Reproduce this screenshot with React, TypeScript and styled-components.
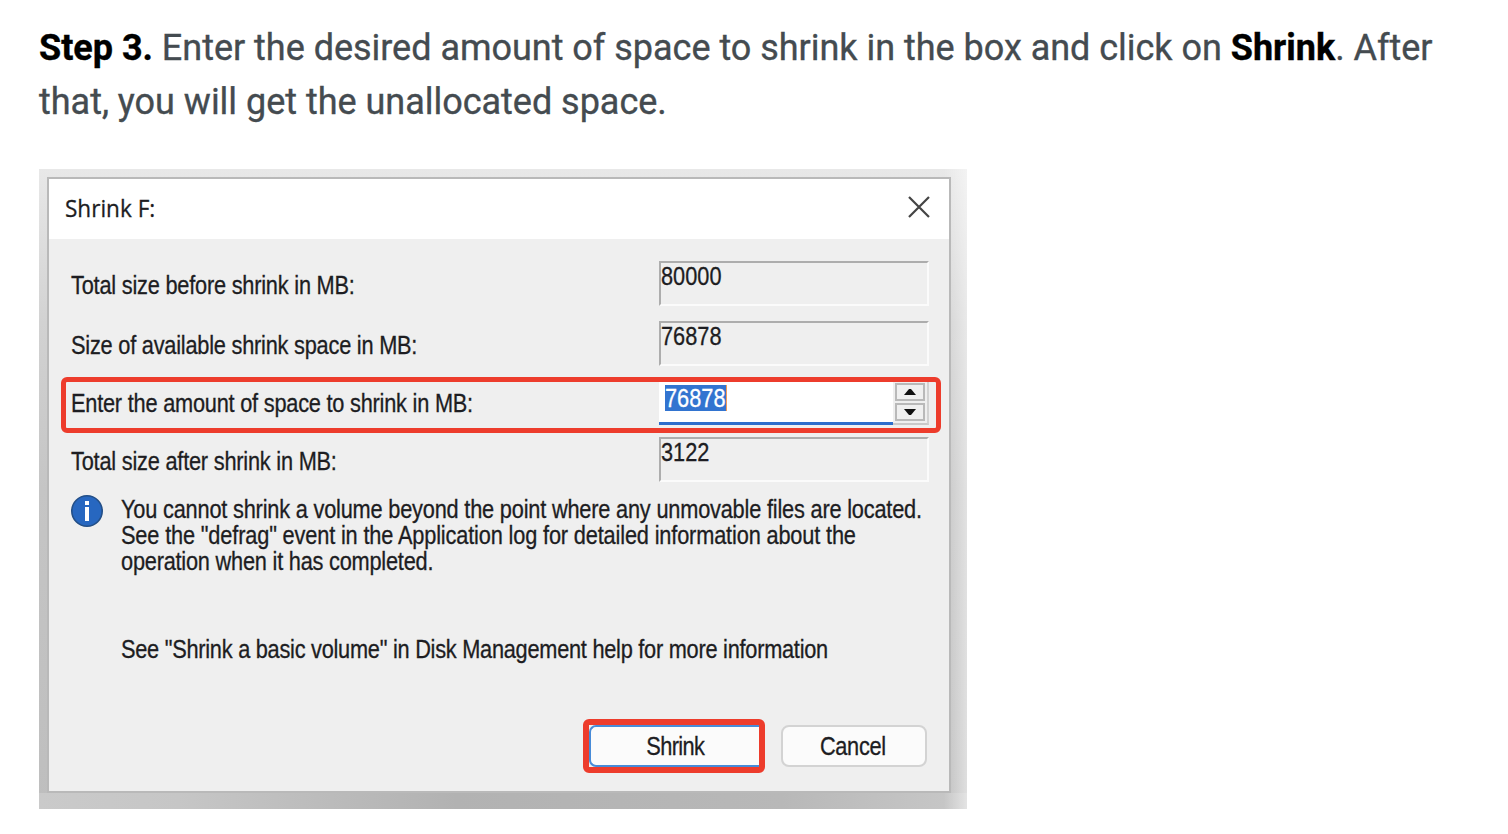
import React from "react";
import styled, { createGlobalStyle } from "styled-components";

const GlobalStyle = createGlobalStyle`
  *, *::before, *::after { box-sizing: border-box; }
  body { margin: 0; background: #fff; overflow: hidden; }
  svg { flex: none; }
`;

const Article = styled.main`
  height: 834px;
  padding: 21px 39px 0;
  overflow: hidden;
`;

const StepText = styled.p`
  margin: 0 0 40px;
  color: #444b50;
  font: 400 36px/54px Roboto, sans-serif;
  letter-spacing: -0.02px;
  white-space: nowrap;
  -webkit-text-stroke: 0.35px currentColor;

  strong { color: #000; font-weight: 700; }
`;

const Figure = styled.figure`
  display: flex;
  width: 928px;
  height: 640px;
  margin: 0;
  padding: 8px 16px 16px 8px;
  background:
    linear-gradient(to right, transparent 905px, rgba(255, 255, 255, 0.5) 928px),
    linear-gradient(to right, #cacaca, #c6c6c6 15%, #b2b2b2 45%, #b8b8b8 80%, #c8c8c8) 0 100% / 100% 16px no-repeat,
    linear-gradient(to bottom, #e8e8e8, #d2d2d2 24%, #c5c5c5 50%, #bebebe);
`;

const Dialog = styled.section`
  display: flex;
  flex-direction: column;
  width: 904px;
  height: 616px;
  border: 2px solid #b9b9b9;
  background: #efefef;
  color: #1d1d22;
  font: 400 25px/26px "Liberation Sans", Arial, sans-serif;
`;

const TitleBar = styled.header`
  display: flex;
  justify-content: space-between;
  height: 60px;
  padding: 17px 19px 0 16px;
  background: #fff;
`;

const Title = styled.h1`
  margin: -1px 0 0;
  font: 400 23.5px/26px "Open Sans", "Noto Sans", sans-serif;
  transform: scaleX(0.96);
  transform-origin: left;
  -webkit-text-stroke: 0.3px currentColor;
`;

const Text = styled.span<{ $spacing?: number; $center?: boolean }>`
  display: block;
  white-space: nowrap;
  letter-spacing: ${(p) => p.$spacing ?? 0}px;
  transform: scaleX(0.87);
  transform-origin: ${(p) => (p.$center ? "center" : "left")};
  -webkit-text-stroke: 0.3px currentColor;
`;

const Form = styled.div`
  display: flex;
  flex-direction: column;
  padding: 22px 8px 0 12px;
`;

const Row = styled.div<{ $gap: number }>`
  display: flex;
  justify-content: space-between;
  height: 45px;
  margin-bottom: ${(p) => p.$gap}px;
  padding: 11px 12px 0 10px;
`;

const Value = styled.output`
  width: 270px;
  height: 45px;
  margin-top: -11px;
  border: 2px solid #fbfbfb;
  border-top-color: #adadad;
  border-left-color: #adadad;
  line-height: 27px;
`;

const HighlightRow = styled.div`
  display: flex;
  justify-content: space-between;
  height: 56px;
  margin-bottom: 4px;
  padding: 8px 7px 0 5px;
  border: 5px solid #ed3c2c;
  border-radius: 6px;
`;

const Spinner = styled.div`
  display: flex;
  width: 270px;
  height: 43px;
  margin-top: -8px;
`;

const Entry = styled.div`
  width: 234px;
  height: 43px;
  padding: 3px 6px;
  border-bottom: 3px solid #2d6dcb;
  background: #fff;
`;

const Selection = styled.mark`
  display: block;
  width: 62px;
  height: 26px;
  border-right: 1px solid #f19a55;
  background: #3274d0;
  color: #fff;
  line-height: 27px;
`;

const Arrows = styled.div`
  display: flex;
  flex-direction: column;
  gap: 2px;
  width: 36px;
  padding: 1px 4px 0 2px;
  border-right: 2px solid #d2d2d2;
  border-bottom: 2px solid #c9c9c9;
`;

const ArrowButton = styled.div`
  display: grid;
  place-items: center;
  width: 30px;
  height: 18px;
  border: 2px solid #b9b9b9;
  background: #f0f0f0;
`;

const Notice = styled.div`
  display: flex;
  height: 128px;
  padding: 13px 0 0 22px;
`;

const NoticeCopy = styled.div`
  padding: 1px 0 0 18px;
`;

const Help = styled.div`
  height: 92px;
  padding: 26px 0 0 72px;
`;

const Actions = styled.footer`
  display: flex;
  gap: 16px;
  margin-top: auto;
  padding: 0 22px 18px 534px;
`;

const PrimaryFrame = styled.div`
  width: 182px;
  height: 54px;
  border: 6px solid #ed3c2c;
  border-radius: 6px;
  background: #efefef;
`;

const Button = styled.button<{ $primary?: boolean }>`
  display: grid;
  place-items: center;
  width: ${(p) => (p.$primary ? 170 : 146)}px;
  height: 42px;
  margin: ${(p) => (p.$primary ? 0 : "6px 0 0")};
  padding: ${(p) => (p.$primary ? "0 0 0 1px" : "0 3px 0 0")};
  border: ${(p) => (p.$primary ? "2px solid #478bd8" : "2px solid #d3d3d3")};
  border-right-width: ${(p) => (p.$primary ? 0 : 2)}px;
  border-radius: ${(p) => (p.$primary ? "7px 0 0 7px" : "8px")};
  background: #fbfbfb;
  color: inherit;
  font: inherit;
`;

function CloseIcon() {
  return (
    <svg width="22" height="22" viewBox="0 0 22 22" fill="none" stroke="#444" strokeWidth="2.2">
      <path d="M1 1 21 21M21 1 1 21" />
    </svg>
  );
}

function InfoIcon() {
  return (
    <svg width="32" height="32" viewBox="0 0 32 32">
      <circle cx="16" cy="16" r="15.2" fill="#2767c0" stroke="#234f87" strokeWidth="1.6" />
      <path d="M14 6h4v4h-4zM14 12h4v14h-4z" fill="#fff" />
    </svg>
  );
}

function Triangle({ down }: { down?: boolean }) {
  return (
    <svg width="12" height="6" viewBox="0 0 12 6">
      <path d={down ? "M0 0H12L7 6h-2z" : "M0 6H12L7 0h-2z"} fill="#111" />
    </svg>
  );
}

export default function App() {
  return (
    <Article>
      <GlobalStyle />
      <StepText>
        <strong>Step 3.</strong> Enter the desired amount of space to shrink in the box and click on <strong>Shrink</strong>. After
        <br />
        that, you will get the unallocated space.
      </StepText>
      <Figure>
        <Dialog>
          <TitleBar>
            <Title>Shrink F:</Title>
            <CloseIcon />
          </TitleBar>
          <Form>
            <Row $gap={15}>
              <Text $spacing={-0.24}>Total size before shrink in MB:</Text>
              <Value><Text>80000</Text></Value>
            </Row>
            <Row $gap={11}>
              <Text $spacing={-0.25}>Size of available shrink space in MB:</Text>
              <Value><Text>76878</Text></Value>
            </Row>
            <HighlightRow>
              <Text $spacing={-0.25}>Enter the amount of space to shrink in MB:</Text>
              <Spinner>
                <Entry><Selection><Text>76878</Text></Selection></Entry>
                <Arrows>
                  <ArrowButton><Triangle /></ArrowButton>
                  <ArrowButton><Triangle down /></ArrowButton>
                </Arrows>
              </Spinner>
            </HighlightRow>
            <Row $gap={0}>
              <Text $spacing={-0.24}>Total size after shrink in MB:</Text>
              <Value><Text>3122</Text></Value>
            </Row>
          </Form>
          <Notice>
            <InfoIcon />
            <NoticeCopy>
              <Text $spacing={-0.22}>You cannot shrink a volume beyond the point where any unmovable files are located.</Text>
              <Text $spacing={-0.175}>See the "defrag" event in the Application log for detailed information about the</Text>
              <Text $spacing={-0.25}>operation when it has completed.</Text>
            </NoticeCopy>
          </Notice>
          <Help>
            <Text $spacing={-0.29}>See "Shrink a basic volume" in Disk Management help for more information</Text>
          </Help>
          <Actions>
            <PrimaryFrame>
              <Button $primary><Text $center $spacing={-0.7}>Shrink</Text></Button>
            </PrimaryFrame>
            <Button><Text $center $spacing={-0.35}>Cancel</Text></Button>
          </Actions>
        </Dialog>
      </Figure>
    </Article>
  );
}
